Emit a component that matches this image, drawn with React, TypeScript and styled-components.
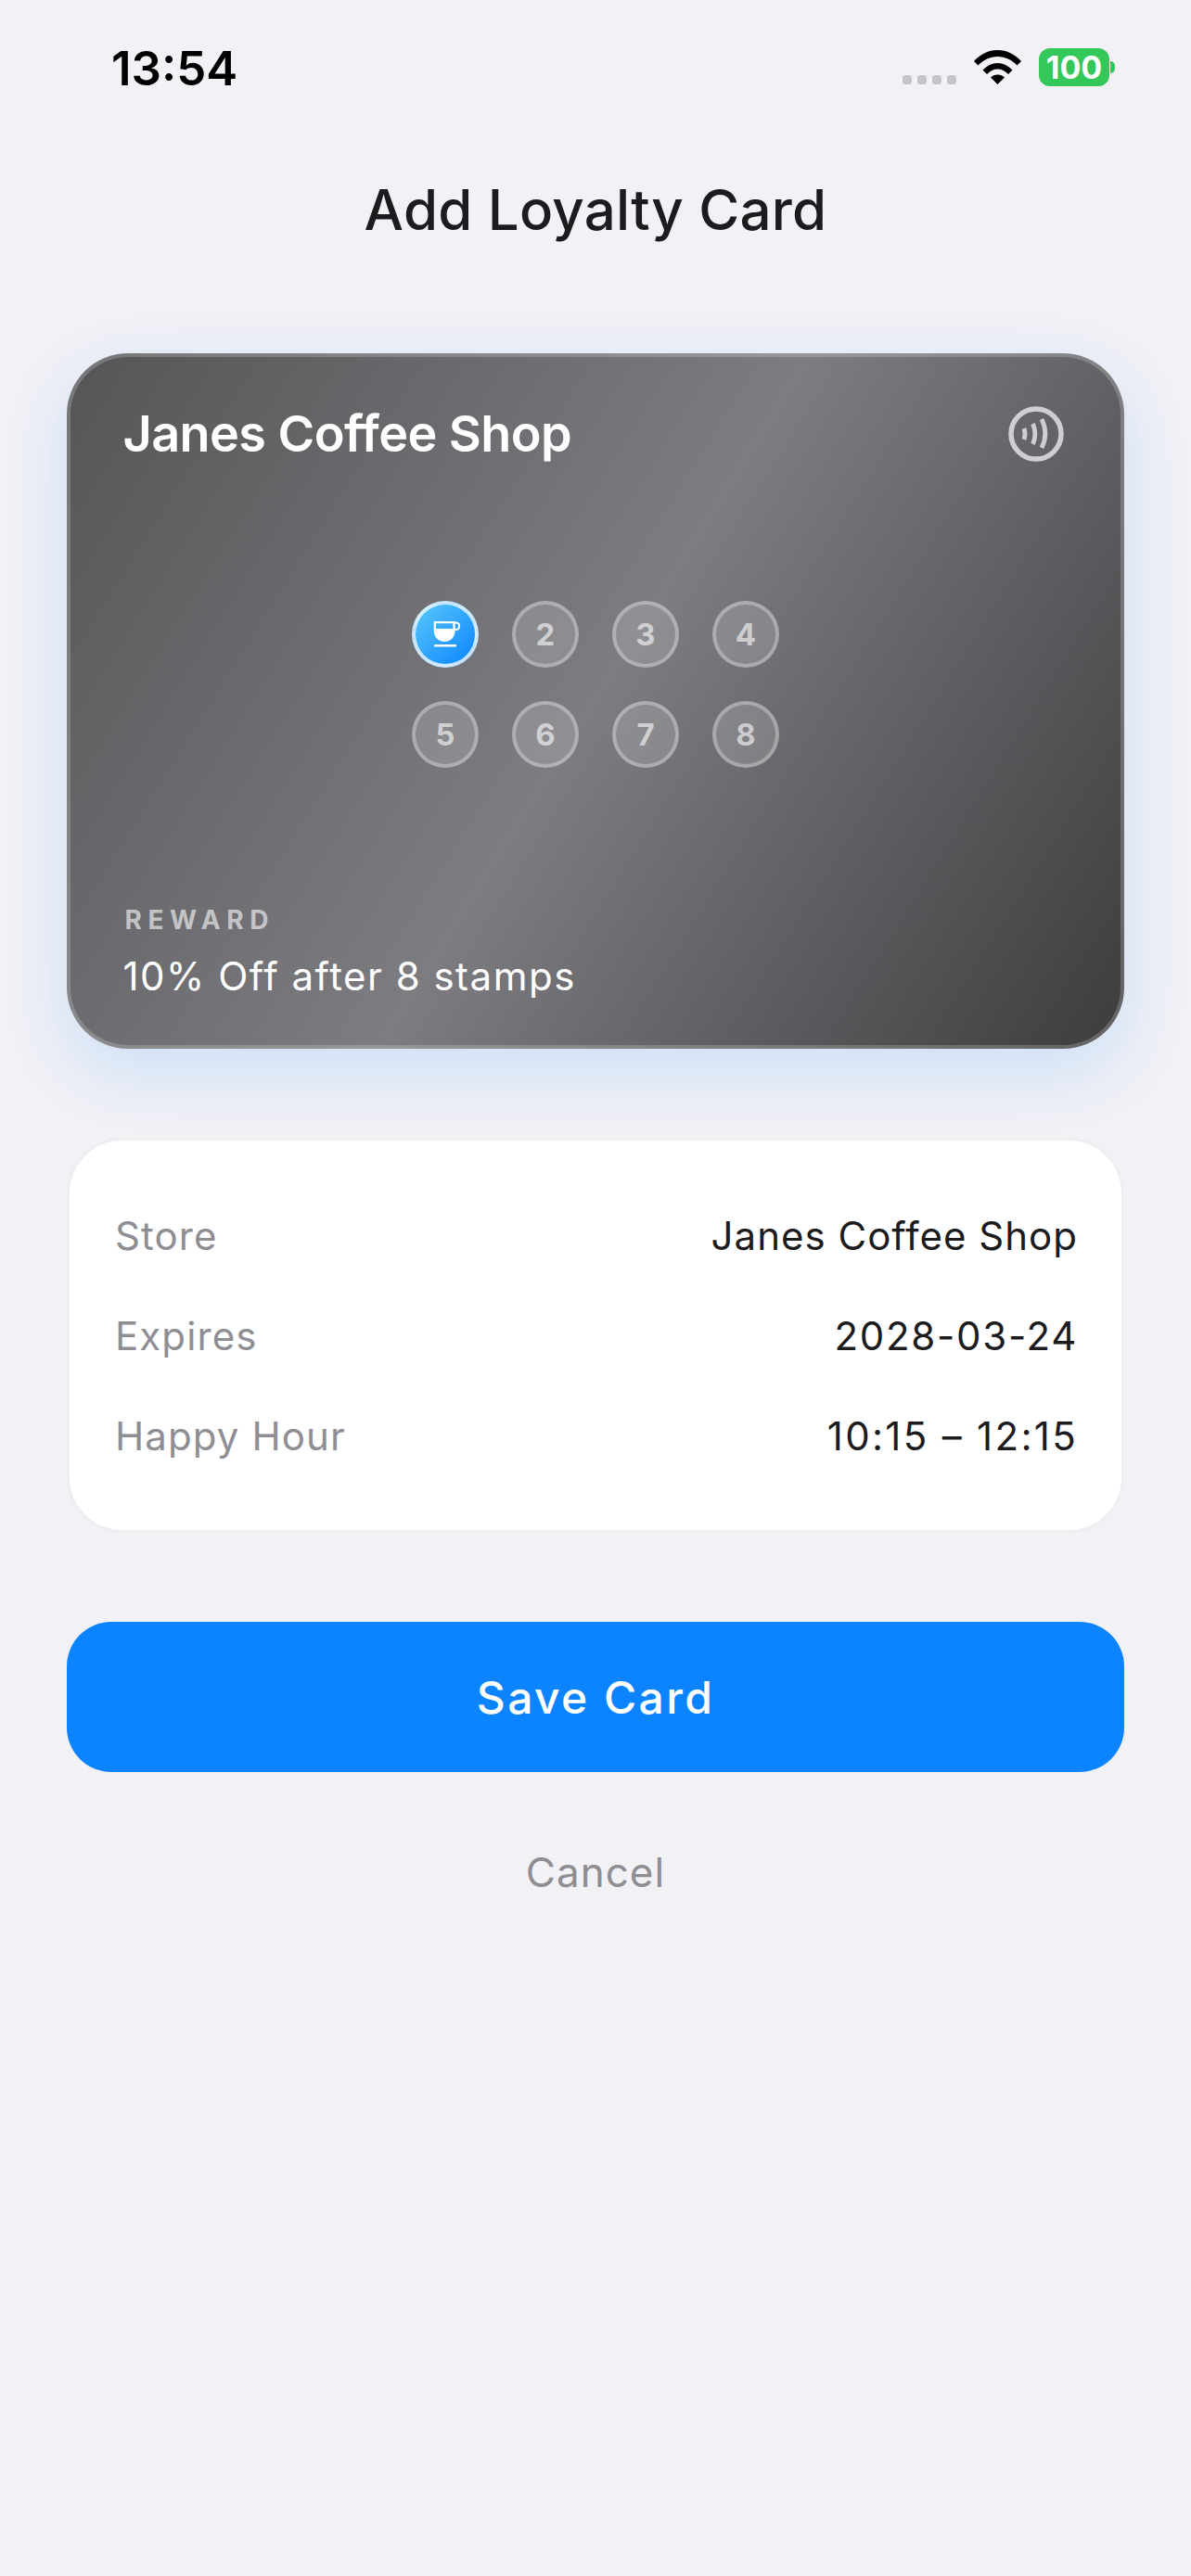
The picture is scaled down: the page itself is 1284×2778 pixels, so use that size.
import styled, { createGlobalStyle } from 'styled-components';

const GlobalStyle = createGlobalStyle`
	html, body {
		margin: 0;
		padding: 0;
		background: #f1f1f6;
		font-family: Inter, "Liberation Sans", sans-serif;
	}
`;

const Screen = styled.div`
	width: 1284px;
	height: 2778px;
	overflow: hidden;
	background: #f1f1f6;
	display: flex;
	flex-direction: column;
`;

const StatusBar = styled.div`
	height: 186px;
	box-sizing: border-box;
	padding: 0 88px 0 120px;
	display: flex;
	justify-content: space-between;
	align-items: flex-start;
`;

const Time = styled.div`
	margin-top: 43px;
	font-size: 51px;
	line-height: 62px;
	font-weight: 600;
	color: #000;
`;

const StatusIcons = styled.div`
	margin-top: 52px;
	display: flex;
	align-items: flex-start;
`;

const CellDots = styled.div`
	margin-top: 29px;
	display: flex;
	gap: 6px;
`;

const CellDot = styled.span`
	width: 10px;
	height: 10px;
	border-radius: 3px;
	background: #c4c4c9;
`;

const WifiIcon = styled.svg`
	margin: 2px 0 0 19px;
`;

const Battery = styled.div`
	margin-left: 19px;
	width: 76px;
	height: 41px;
	border-radius: 12px;
	background: #34c759;
	color: #fff;
	font-size: 34px;
	font-weight: 700;
	line-height: 41px;
	text-align: center;
	position: relative;

	&::after {
		content: '';
		position: absolute;
		right: -6px;
		top: 14px;
		width: 5px;
		height: 13px;
		border-radius: 0 5px 5px 0;
		background: #34c759;
	}
`;

const Title = styled.h1`
	margin: 0;
	text-align: center;
	font-size: 60px;
	line-height: 80px;
	font-weight: 500;
	letter-spacing: 0.25px;
	color: #1c1c1e;
`;

const LoyaltyCard = styled.div`
	margin: 115px 72px 0;
	height: 750px;
	box-sizing: border-box;
	padding: 50px 61.5px 48px 56.5px;
	border: 4.5px solid rgba(255, 255, 255, 0.2);
	border-radius: 66px;
	background-origin: border-box;
	background-color: #6a6a6e;
	background-image: linear-gradient(122deg, #555557 0%, #7d7c81 50%, #3c3c3e 100%);
	box-shadow: 0 24px 72px rgba(10, 132, 255, 0.16);
	display: flex;
	flex-direction: column;
	justify-content: space-between;
`;

const CardHeader = styled.div`
	display: flex;
	justify-content: space-between;
	align-items: center;
`;

const ShopName = styled.div`
	font-size: 54px;
	line-height: 66px;
	font-weight: 600;
	color: #fff;
	letter-spacing: -0.6px;
`;

const StampGrid = styled.div`
	align-self: center;
	margin-left: 4px;
	margin-right: -1px;
	display: grid;
	grid-template-columns: repeat(4, 72px);
	gap: 36px;
`;

const Stamp = styled.div<{ $filled?: boolean }>`
	width: 72px;
	height: 72px;
	box-sizing: border-box;
	border-radius: 50%;
	border: 4px solid ${(props) => (props.$filled ? 'rgba(255, 255, 255, 0.75)' : 'rgba(255, 255, 255, 0.3)')};
	background: ${(props) =>
		props.$filled ? 'linear-gradient(135deg, #5ac8fa 0%, #0a84ff 100%)' : 'rgba(255, 255, 255, 0.15)'};
	display: flex;
	align-items: center;
	justify-content: center;
	color: rgba(255, 255, 255, 0.6);
	font-size: 33px;
	font-weight: 700;
`;

const Reward = styled.div`
	display: flex;
	flex-direction: column;
	gap: 18px;
`;

const RewardLabel = styled.div`
	font-size: 28px;
	line-height: 34px;
	font-weight: 700;
	letter-spacing: 6.6px;
	color: rgba(255, 255, 255, 0.6);
	margin-left: 2px;
`;

const RewardText = styled.div`
	font-size: 42px;
	line-height: 52px;
	letter-spacing: 1.5px;
	color: #fff;
`;

const InfoCard = styled.div`
	margin: 96px 72px 0;
	height: 426px;
	box-sizing: border-box;
	padding: 77px 47px 0 49px;
	background: #fff;
	border: 3px solid #eeeef0;
	border-radius: 60px;
	display: flex;
	flex-direction: column;
	gap: 58px;
`;

const InfoRow = styled.div`
	height: 50px;
	display: flex;
	justify-content: space-between;
	align-items: center;
	font-size: 42px;
	letter-spacing: 1.1px;
`;

const InfoLabel = styled.span`
	color: #8e8e93;
`;

const InfoValue = styled.span<{ $tracking?: number }>`
	color: #1c1c1e;
	letter-spacing: ${(props) => props.$tracking ?? 1}px;
`;

const SaveButton = styled.button`
	margin: 96px 72px 0;
	height: 162px;
	border: 0;
	border-radius: 48px;
	background: #0d84ff;
	color: #fff;
	font-family: inherit;
	font-size: 48px;
	font-weight: 500;
	letter-spacing: 2.4px;
`;

const CancelButton = styled.button`
	margin: 78px auto 0;
	height: 60px;
	padding: 0;
	border: 0;
	background: none;
	color: #8e8e93;
	font-family: inherit;
	font-size: 44px;
	letter-spacing: 1px;
`;

const cupStamp = (
	<svg width="31" height="28" viewBox="0 0 31 28" aria-hidden="true">
		<path
			fill="#fff"
			fillRule="evenodd"
			d="M2.700 0H25.700V9.500C25.700 17 21 22 14.200 22S2.700 17 2.700 9.500zM5 2.200V8H23.400V2.200z"
		/>
		<path d="M25 1.500h1.500a3.500 3.500 0 0 1 0 7.500H25" fill="none" stroke="#fff" strokeWidth="2.200" />
		<rect x="3" y="25" width="24" height="2.500" rx="0.6" fill="#fff" />
	</svg>
);

export default function App() {
	const stamps = [2, 3, 4, 5, 6, 7, 8];

	return (
		<>
			<GlobalStyle />
			<Screen>
				<StatusBar>
					<Time>13:54</Time>
					<StatusIcons>
						<CellDots>
							<CellDot />
							<CellDot />
							<CellDot />
							<CellDot />
						</CellDots>
						<WifiIcon width="51" height="37" viewBox="0 0 51 37" aria-hidden="true">
							<path d="M0 12C7 4.500 15.500 0 25.500 0S44 4.500 51 12l-4.500 4.500C40.500 10.500 33.500 7 25.500 7S10.500 10.500 4.500 16.500z" />
							<path d="M9.500 21.500C14 17 19.500 14 25.500 14s11.500 3 16 7.500L37 26c-3.500-3.500-7-5.500-11.500-5.500S17.500 22.500 14 26z" />
							<path d="M18 29.500c2-2 4.500-3 7.500-3s5.500 1 7.500 3L25.500 37z" />
						</WifiIcon>
						<Battery>100</Battery>
					</StatusIcons>
				</StatusBar>

				<Title>Add Loyalty Card</Title>

				<LoyaltyCard>
					<CardHeader>
						<ShopName>Janes Coffee Shop</ShopName>
						<svg width="60" height="60" viewBox="0 0 60 60" fill="none" aria-hidden="true">
							<circle cx="30" cy="30" r="27" stroke="#cfcfd1" strokeWidth="5.500" />
							<g stroke="#cfcfd1" strokeWidth="4.800">
								<path d="M17 24c1.400 4 1.400 8 0 12" />
								<path d="M26.500 19c3 7 3 15 0 22" />
								<path d="M36 14c5 10 5 21 0 31" />
							</g>
						</svg>
					</CardHeader>

					<StampGrid>
						<Stamp $filled>{cupStamp}</Stamp>
						{stamps.map((stamp) => (
							<Stamp key={stamp}>{stamp}</Stamp>
						))}
					</StampGrid>

					<Reward>
						<RewardLabel>REWARD</RewardLabel>
						<RewardText>10% Off after 8 stamps</RewardText>
					</Reward>
				</LoyaltyCard>

				<InfoCard>
					<InfoRow>
						<InfoLabel>Store</InfoLabel>
						<InfoValue>Janes Coffee Shop</InfoValue>
					</InfoRow>
					<InfoRow>
						<InfoLabel>Expires</InfoLabel>
						<InfoValue $tracking={1.7}>2028-03-24</InfoValue>
					</InfoRow>
					<InfoRow>
						<InfoLabel>Happy Hour</InfoLabel>
						<InfoValue $tracking={2.3}>10:15 – 12:15</InfoValue>
					</InfoRow>
				</InfoCard>

				<SaveButton>Save Card</SaveButton>
				<CancelButton>Cancel</CancelButton>
			</Screen>
		</>
	);
}
